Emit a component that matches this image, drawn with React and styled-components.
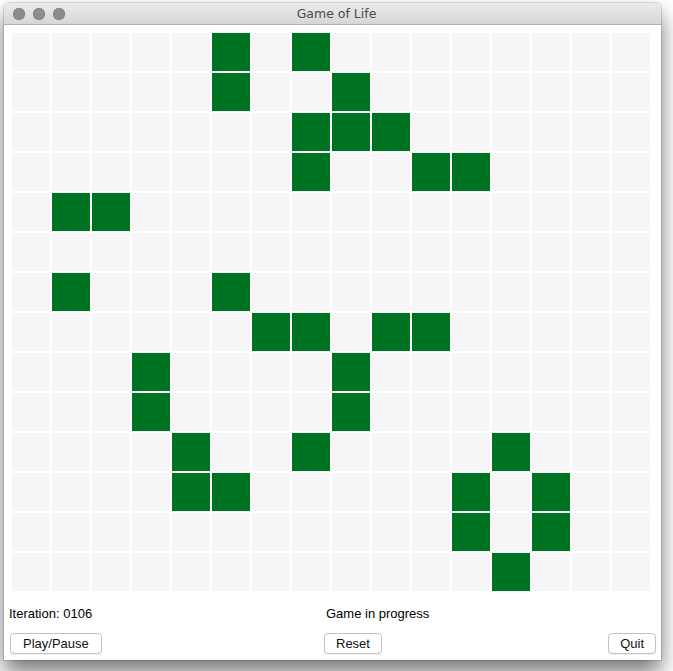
import React from 'react';
import styled, { createGlobalStyle } from 'styled-components';

const GlobalStyle = createGlobalStyle`
  html, body {
    margin: 0;
    padding: 0;
    background: #ffffff;
    overflow: hidden;
  }
  body {
    font-family: "Liberation Sans", Arial, sans-serif;
  }
`;

const Page = styled.div`
  width: 673px;
  height: 671px;
  padding: 3px 0 0 4px;
  box-sizing: border-box;
`;

const Window = styled.div`
  width: 657px;
  height: 657px;
  background: #ffffff;
  border-radius: 5px 5px 0 0;
  box-shadow: 0 12px 22px rgba(0, 0, 0, 0.55), 0 0 0 1px rgba(0, 0, 0, 0.12);
  display: flex;
  flex-direction: column;
  overflow: hidden;
`;

const TitleBar = styled.div`
  height: 21px;
  flex-shrink: 0;
  position: relative;
  display: flex;
  align-items: center;
  justify-content: center;
  background: linear-gradient(#ececec, #d6d6d6);
  border-bottom: 1px solid #b1b1b1;
`;

const Lights = styled.div`
  position: absolute;
  left: 9px;
  top: 5px;
  display: flex;
  gap: 8px;
`;

const Light = styled.span`
  width: 12px;
  height: 12px;
  border-radius: 50%;
  background: #8d8d8d;
  box-shadow: inset 0 0 0 0.5px #777;
`;

const Title = styled.div`
  font-family: "DejaVu Sans", "Lucida Grande", sans-serif;
  font-size: 12.5px;
  color: #4a4a4a;
  margin-left: 8px;
`;

const Content = styled.div`
  flex: 1;
  display: flex;
  flex-direction: column;
  padding: 8px 5px 0 8px;
`;

const Board = styled.div`
  display: grid;
  grid-template-columns: repeat(16, 38px);
  grid-auto-rows: 38px;
  gap: 2px;
`;

const Cell = styled.div`
  background: ${({ alive }) => (alive ? '#007322' : '#f6f6f6')};
`;

const Controls = styled.div`
  display: grid;
  grid-template-columns: 315px 1fr auto;
  margin-left: -3px;
  margin-top: 15px;
  row-gap: 11px;
  align-items: center;
`;

const Label = styled.div`
  font-size: 13px;
  line-height: 16px;
  color: #000;
  padding-left: ${({ shift }) => shift || 0}px;
`;

const Button = styled.button`
  justify-self: ${({ align }) => align || 'start'};
  height: 21px;
  padding: 0 ${({ pad }) => pad}px;
  font-family: "Liberation Sans", Arial, sans-serif;
  font-size: 13px;
  color: #111;
  background: #ffffff;
  border: 1px solid #c2c2c2;
  border-radius: 4px;
  box-shadow: 0 1px 0 rgba(0, 0, 0, 0.06);
  margin-left: ${({ shift }) => shift || 0}px;
`;

const alive = [
  [5, 7],
  [5, 8],
  [7, 8, 9],
  [7, 10, 11],
  [1, 2],
  [],
  [1, 5],
  [6, 7, 9, 10],
  [3, 8],
  [3, 8],
  [4, 7, 12],
  [4, 5, 11, 13],
  [11, 13],
  [12],
];

export default function App() {
  return (
    <Page>
      <GlobalStyle />
      <Window>
        <TitleBar>
          <Lights>
            <Light />
            <Light />
            <Light />
          </Lights>
          <Title>Game of Life</Title>
        </TitleBar>
        <Content>
          <Board>
            {alive.map((row, r) =>
              Array.from({ length: 16 }, (_, c) => (
                <Cell key={r + '-' + c} alive={row.includes(c)} />
              ))
            )}
          </Board>
          <Controls>
            <Label>Iteration: 0106</Label>
            <Label shift={2}>Game in progress</Label>
            <div />
            <Button pad={12} shift={1}>Play/Pause</Button>
            <Button pad={11}>Reset</Button>
            <Button pad={11} align="end">Quit</Button>
          </Controls>
        </Content>
      </Window>
    </Page>
  );
}
